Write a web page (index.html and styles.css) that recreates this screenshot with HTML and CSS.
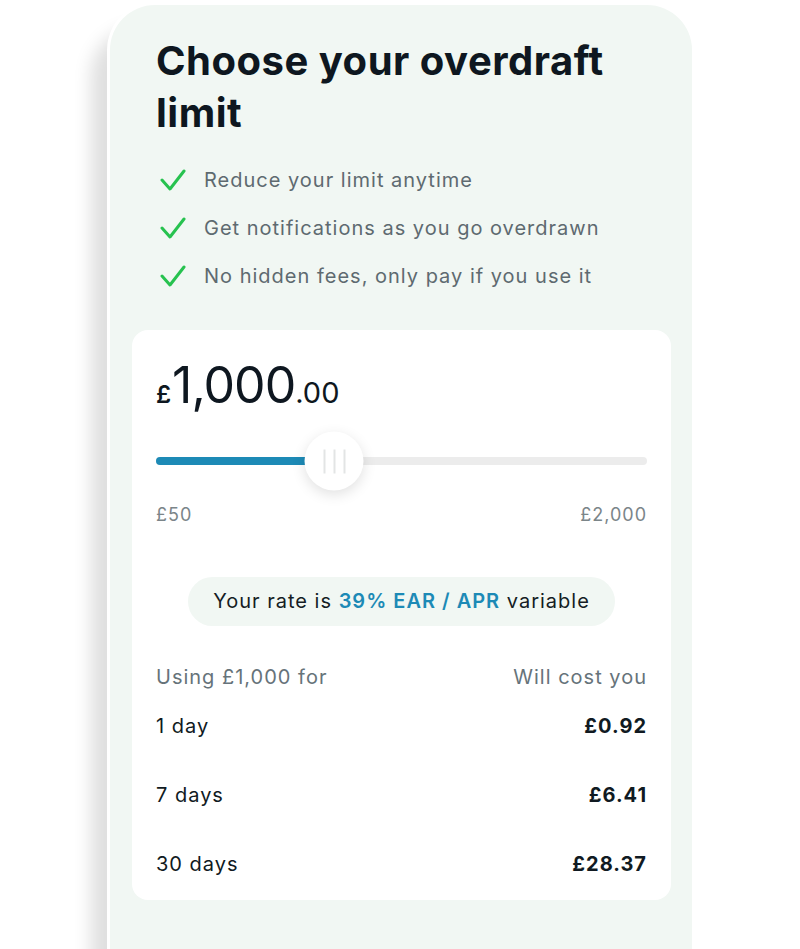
FILE: index.html
```html
<!DOCTYPE html>
<html lang="en">
<head>
  <meta charset="UTF-8" />
  <meta name="viewport" content="width=device-width, initial-scale=1" />
  <title>Overdraft limit</title>
  <link rel="stylesheet" href="styles.css">
</head>
<body>

  <div class="phone">
    <h1 class="title">Choose your overdraft limit</h1>

    <ul class="perks">
      <li>
        <svg class="tick" viewBox="0 0 26 24" width="26" height="24"><polyline points="2,12 10,21 24,3" /></svg>
        Reduce your limit anytime
      </li>
      <li>
        <svg class="tick" viewBox="0 0 26 24" width="26" height="24"><polyline points="2,12 10,21 24,3" /></svg>
        Get notifications as you go overdrawn
      </li>
      <li>
        <svg class="tick" viewBox="0 0 26 24" width="26" height="24"><polyline points="2,12 10,21 24,3" /></svg>
        No hidden fees, only pay if you use it
      </li>
    </ul>

    <div class="card">
      <div class="amount"><span class="pound">£</span>1,000<span class="pence">.00</span></div>

      <div class="slider">
        <div class="fill" style="width: 36.3%"></div>
        <div class="thumb" style="left: 36.3%">
          <span></span><span></span><span></span>
        </div>
      </div>

      <div class="range">
        <span>£50</span>
        <span>£2,000</span>
      </div>

      <div class="rate-wrap">
        <div class="rate">Your rate is <strong>39% EAR / APR</strong> variable</div>
      </div>

      <div class="costs">
        <div class="row head">
          <span>Using £1,000 for</span>
          <span>Will cost you</span>
        </div>
        <div class="row">
          <span>1 day</span>
          <b>£0.92</b>
        </div>
        <div class="row">
          <span>7 days</span>
          <b>£6.41</b>
        </div>
        <div class="row">
          <span>30 days</span>
          <b>£28.37</b>
        </div>
      </div>
    </div>
  </div>

</body>
</html>
```

FILE: styles.css
```css
body {
  margin: 0;
  font-family: Inter, "Noto Sans", sans-serif;
  letter-spacing: 1px;
  background-color: #ffffff;
  color: #101a22;
  overflow: hidden;
}

.phone {
  width: 588px;
  min-height: 960px;
  margin: 2px 0 0 107px;
  padding: 30px 21px 0 22px;
  box-sizing: border-box;
  border: 3px solid #ffffff;
  border-bottom: none;
  border-radius: 48px 48px 0 0;
  background-color: #f1f7f3;
  box-shadow: -16px 26px 18px rgba(0, 0, 0, 0.13);
}

.title {
  margin: 0;
  padding: 0 24px;
  font-size: 40px;
  line-height: 52px;
  font-weight: 700;
  letter-spacing: 0.5px;
  color: #0e1720;
}

.perks {
  list-style: none;
  margin: 17px 0 0;
  padding: 0 0 0 28px;
}

.perks li {
  display: flex;
  align-items: center;
  height: 48px;
  font-size: 20px;
  color: #5e6a70;
}

.tick {
  margin-right: 18px;
  flex-shrink: 0;
}

.tick polyline {
  fill: none;
  stroke: #27c24f;
  stroke-width: 3;
  stroke-linecap: round;
  stroke-linejoin: round;
}

.card {
  margin-top: 30px;
  padding: 24px 24px 22px;
  background-color: #ffffff;
  border-radius: 16px;
}

.amount {
  margin-top: 7px;
  font-size: 50px;
  line-height: 48px;
  font-weight: 400;
  letter-spacing: -1px;
  color: #0e1720;
}

.pound {
  font-size: 24px;
  font-weight: 600;
  margin-right: 2px;
}

.pence {
  font-size: 29px;
  letter-spacing: 0;
}

.slider {
  position: relative;
  margin-top: 38px;
  height: 8px;
  border-radius: 4px;
  background-color: #ececec;
}

.fill {
  height: 100%;
  border-radius: 4px;
  background-color: #1d8ab6;
}

.thumb {
  position: absolute;
  top: 50%;
  width: 59px;
  height: 59px;
  transform: translate(-50%, -50%);
  border-radius: 50%;
  background-color: #ffffff;
  box-shadow: 0 4px 14px rgba(0, 0, 0, 0.12);
  display: flex;
  justify-content: center;
  align-items: center;
  gap: 8px;
}

.thumb span {
  width: 2px;
  height: 24px;
  background-color: #e3e5e5;
}

.range {
  display: flex;
  justify-content: space-between;
  margin-top: 38px;
  font-size: 18px;
  line-height: 24px;
  color: #7b8589;
}

.rate-wrap {
  display: flex;
  justify-content: center;
  margin-top: 50px;
}

.rate {
  padding: 0 25px;
  height: 49px;
  line-height: 49px;
  border-radius: 25px;
  background-color: #f1f7f3;
  font-size: 20px;
  color: #151d24;
}

.rate strong {
  font-weight: 600;
  color: #1d8ab6;
}

.costs {
  margin-top: 37px;
}

.row {
  display: flex;
  justify-content: space-between;
  font-size: 20px;
  line-height: 28px;
  margin-top: 41px;
  color: #101a22;
}

.row.head {
  margin-top: 0;
  margin-bottom: -20px;
  color: #66737a;
}

.row b {
  font-weight: 700;
}
```
